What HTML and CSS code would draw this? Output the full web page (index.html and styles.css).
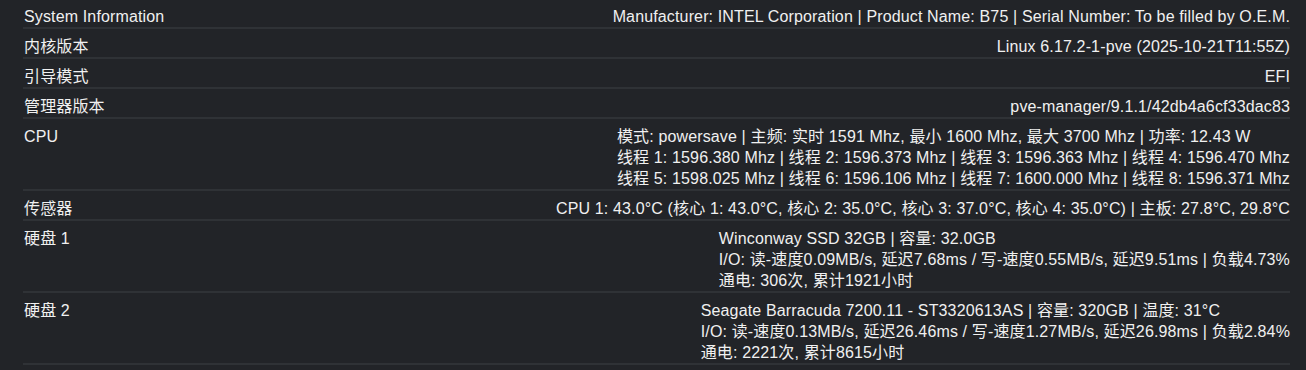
FILE: index.html
```html
<!DOCTYPE html>
<html lang="zh-CN">
<head>
<meta charset="utf-8">
<title>System Information</title>
<link rel="stylesheet" href="styles.css">
</head>
<body>
<div class="info">
  <div class="row">
    <div class="label">System Information</div>
    <div class="value">Manufacturer: INTEL Corporation | Product Name: B75 | Serial Number: To be filled by O.E.M.</div>
  </div>
  <div class="row">
    <div class="label">内核版本</div>
    <div class="value">Linux 6.17.2-1-pve (2025-10-21T11:55Z)</div>
  </div>
  <div class="row">
    <div class="label">引导模式</div>
    <div class="value">EFI</div>
  </div>
  <div class="row">
    <div class="label">管理器版本</div>
    <div class="value">pve-manager/9.1.1/42db4a6cf33dac83</div>
  </div>
  <div class="row">
    <div class="label">CPU</div>
    <div class="value">
      <div>模式: powersave | 主频: 实时 1591 Mhz, 最小 1600 Mhz, 最大 3700 Mhz | 功率: 12.43 W</div>
      <div>线程 1: 1596.380 Mhz | 线程 2: 1596.373 Mhz | 线程 3: 1596.363 Mhz | 线程 4: 1596.470 Mhz</div>
      <div>线程 5: 1598.025 Mhz | 线程 6: 1596.106 Mhz | 线程 7: 1600.000 Mhz | 线程 8: 1596.371 Mhz</div>
    </div>
  </div>
  <div class="row">
    <div class="label">传感器</div>
    <div class="value">CPU 1: 43.0°C (核心 1: 43.0°C, 核心 2: 35.0°C, 核心 3: 37.0°C, 核心 4: 35.0°C) | 主板: 27.8°C, 29.8°C</div>
  </div>
  <div class="row">
    <div class="label">硬盘 1</div>
    <div class="value">
      <div>Winconway SSD 32GB | 容量: 32.0GB</div>
      <div>I/O: 读-速度0.09MB/s, 延迟7.68ms / 写-速度0.55MB/s, 延迟9.51ms | 负载4.73%</div>
      <div>通电: 306次, 累计1921小时</div>
    </div>
  </div>
  <div class="row">
    <div class="label">硬盘 2</div>
    <div class="value">
      <div>Seagate Barracuda 7200.11 - ST3320613AS | 容量: 320GB | 温度: 31°C</div>
      <div>I/O: 读-速度0.13MB/s, 延迟26.46ms / 写-速度1.27MB/s, 延迟26.98ms | 负载2.84%</div>
      <div>通电: 2221次, 累计8615小时</div>
    </div>
  </div>
</div>
</body>
</html>
```
FILE: styles.css
```css
html, body {
  margin: 0;
  padding: 0;
  background: #222428;
}
body {
  font-family: "Liberation Sans", Arial, "Noto Sans CJK SC", sans-serif;
  font-size: 16px;
  color: #f0f0f0;
  letter-spacing: 0.14px;
}
.info {
  margin: -1px 16px 0 23px;
}
.row {
  display: flex;
  justify-content: space-between;
  align-items: flex-start;
  padding: 7px 0 0 1px;
  line-height: 21px;
  border-bottom: 2px solid #2f3236;
}
.label {
  white-space: nowrap;
}
.value {
  text-align: left;
  white-space: nowrap;
}
```
